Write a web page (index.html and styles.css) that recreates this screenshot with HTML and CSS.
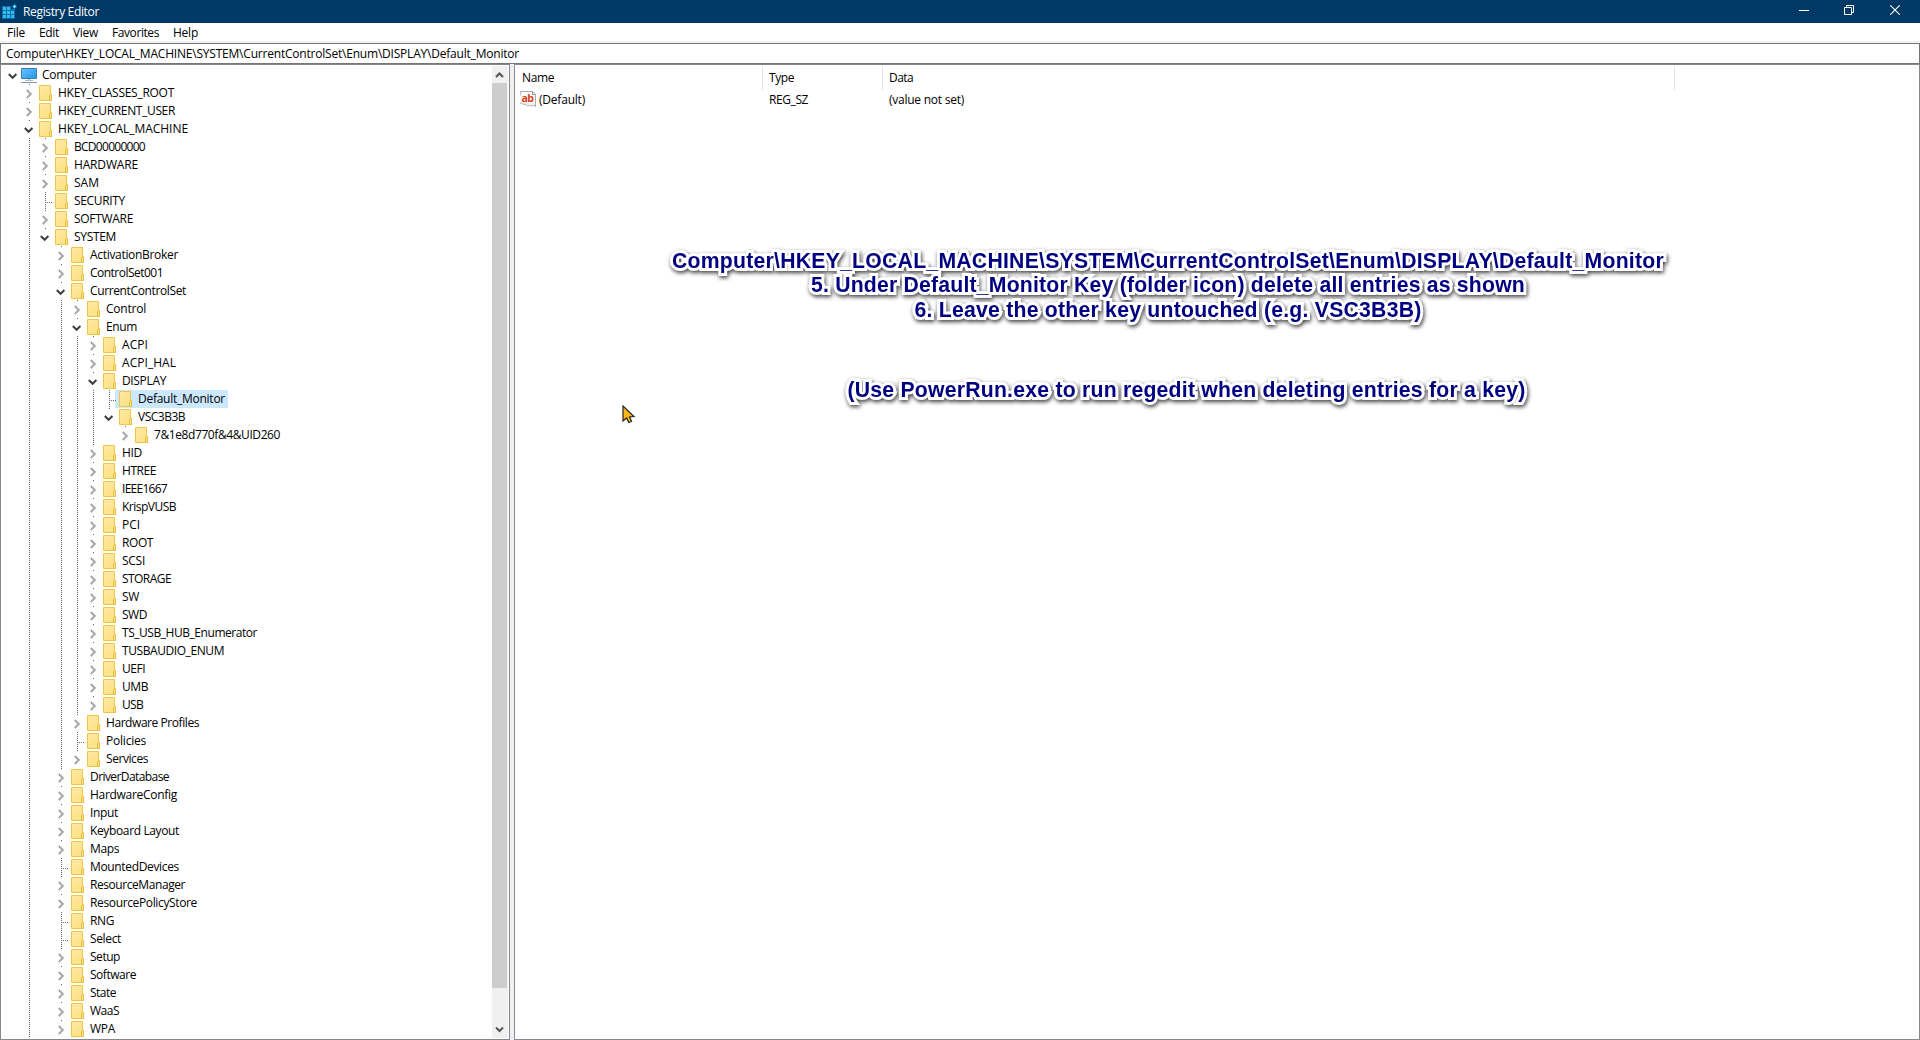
FILE: index.html
```html
<!DOCTYPE html>
<html lang="en">
<head>
<meta charset="utf-8">
<title>Registry Editor</title>
<link rel="stylesheet" href="styles.css">
</head>
<body>
<svg width="0" height="0" class="defs" aria-hidden="true">
  <defs>
    <linearGradient id="fold" x1="0" y1="0" x2="1" y2="1"><stop offset="0" stop-color="#ffeaa6"/><stop offset="1" stop-color="#fddf7c"/></linearGradient>
    <linearGradient id="screen" x1="0" y1="0" x2="1" y2="1"><stop offset="0" stop-color="#6cc3ff"/><stop offset="1" stop-color="#2196ee"/></linearGradient>
    <symbol id="folder" viewBox="0 0 13 16">
      <path d="M.5.5h11v9h1v6H.5z" fill="url(#fold)" stroke="#edc548"/>
      <path d="M10.5 15.5v-5l1-1h1v6z" fill="#ffe48c" stroke="#e5bd42"/>
    </symbol>
    <symbol id="right" viewBox="0 0 7 10"><path d="M.8 1l4 4-4 4" fill="none" stroke="#a6a6a6" stroke-width="2"/></symbol>
    <symbol id="down" viewBox="0 0 10 7"><path d="M.8 1l3.800 3.800L8.400 1" fill="none" stroke="#404040" stroke-width="2"/></symbol>
  </defs>
</svg>
<div class="window">
  <header class="titlebar">
    <svg class="appicon" width="16" height="16" viewBox="0 0 16 16">
      <path d="M0 2h9v3h4v10H0z" fill="#0a6ea8"/>
      <g fill="#35bdf0"><path d="M1 3h3v3H1zM5 3h3v3H5zM1 7h3v3H1zM5 7h3v3H5zM9 7h3v3H9zM1 11h3v3H1zM5 11h3v3H5zM9 11h3v3H9z"/></g>
      <path d="M12.5 0L15 2.5 12.5 5 10 2.5z" fill="#1592d2"/><path d="M12.5 1v3M11 2.5h3" stroke="#7fe0ff"/>
    </svg>
    <span class="fit title" data-w="76">Registry Editor</span>
    <div class="controls">
      <svg width="10" height="10"><path d="M0 5.5h10" stroke="#fff"/></svg>
      <svg width="10" height="10"><path d="M.5 2.5h7v7h-7zM2.5 2V.5h7v7H8" stroke="#fff" fill="none"/></svg>
      <svg width="10" height="10"><path d="M.3.3l9.4 9.4M9.7.3L.3 9.7" stroke="#fff" stroke-width="1.1"/></svg>
    </div>
  </header>
  <nav class="menu">
    <span class="fit" data-w="18">File</span><span class="fit" data-w="20">Edit</span><span class="fit" data-w="25">View</span><span class="fit" data-w="47">Favorites</span><span class="fit" data-w="25">Help</span>
  </nav>
  <div class="address"><span class="fit" data-w="513">Computer\HKEY_LOCAL_MACHINE\SYSTEM\CurrentControlSet\Enum\DISPLAY\Default_Monitor</span></div>
  <main class="panes">
    <section class="tree-pane">
      <div class="tree" id="tree"></div>
      <div class="scrollbar">
        <svg width="15" height="17"><path d="M4 11l3.5-3.5L11 11" fill="none" stroke="#555" stroke-width="2"/></svg>
        <div class="thumb"></div>
        <svg width="15" height="17"><path d="M4 6.500l3.500 3.500L11 6.500" fill="none" stroke="#555" stroke-width="2"/></svg>
      </div>
    </section>
    <section class="values">
      <div class="row head"><div><span class="fit" data-w="32">Name</span></div><div><span class="fit" data-w="25">Type</span></div><div><span class="fit" data-w="24">Data</span></div></div>
      <div class="row entry">
        <div>
          <svg width="16" height="16" viewBox="0 0 16 16"><path d="M.5.5h12l3 3v12l-2-1.500-2 1-2-1-2 1-2-2-2 .5-2-1.500-3 1z" fill="#fafafa" stroke="#aaa"/><path d="M12.500.5v3h3" fill="none" stroke="#999"/><text x="1.500" y="10.500" class="ab">ab</text></svg>
          <span class="fit" data-w="46">(Default)</span>
        </div>
        <div><span class="fit" data-w="39">REG_SZ</span></div><div><span class="fit" data-w="75">(value not set)</span></div>
      </div>
    </section>
  </main>
  <div class="notes">
    <p><span class="fit" data-w="992">Computer\HKEY_LOCAL_MACHINE\SYSTEM\CurrentControlSet\Enum\DISPLAY\Default_Monitor</span></p>
    <p><span class="fit" data-w="714">5. Under Default_Monitor Key (folder icon) delete all entries as shown</span></p>
    <p><span class="fit" data-w="507">6. Leave the other key untouched (e.g. VSC3B3B)</span></p>
    <p class="aside"><span class="fit" data-w="678">(Use PowerRun.exe to run regedit when deleting entries for a key)</span></p>
  </div>
  <svg class="cursor" width="14" height="20" viewBox="0 0 14 20"><path d="M1 1v15l3.700-3 2.200 4.500 2.600-1.300-2-4.200 4.500-.5z" fill="#fdb813" stroke="#222" stroke-width="1.200"/></svg>
</div>
<script src="tree.js"></script>
</body>
</html>
```
FILE: tree.js
```js
// Each row: depth, state (o = open, c = closed, l = leaf), label, label width
const rows = [
  [0,'o','Computer',54],[1,'c','HKEY_CLASSES_ROOT',116],[1,'c','HKEY_CURRENT_USER',117],[1,'o','HKEY_LOCAL_MACHINE',130],
  [2,'c','BCD00000000',71],[2,'c','HARDWARE',64],[2,'c','SAM',25],[2,'l','SECURITY',51],[2,'c','SOFTWARE',59],[2,'o','SYSTEM',42],
  [3,'c','ActivationBroker',88],[3,'c','ControlSet001',73],[3,'o','CurrentControlSet',96],
  [4,'c','Control',40],[4,'o','Enum',31],
  [5,'c','ACPI',26],[5,'c','ACPI_HAL',54],[5,'o','DISPLAY',44],
  [6,'l','Default_Monitor',87],[6,'o','VSC3B3B',47],[7,'c','7&1e8d770f&4&UID260',126],
  [5,'c','HID',20],[5,'c','HTREE',34],[5,'c','IEEE1667',45],[5,'c','KrispVUSB',54],[5,'c','PCI',18],[5,'c','ROOT',31],
  [5,'c','SCSI',23],[5,'c','STORAGE',49],[5,'c','SW',17],[5,'c','SWD',25],[5,'c','TS_USB_HUB_Enumerator',135],
  [5,'c','TUSBAUDIO_ENUM',102],[5,'c','UEFI',23],[5,'c','UMB',26],[5,'c','USB',21],
  [4,'c','Hardware Profiles',93],[4,'l','Policies',40],[4,'c','Services',42],
  [3,'c','DriverDatabase',79],[3,'c','HardwareConfig',87],[3,'c','Input',28],[3,'c','Keyboard Layout',89],[3,'c','Maps',29],
  [3,'l','MountedDevices',89],[3,'c','ResourceManager',95],[3,'c','ResourcePolicyStore',107],[3,'l','RNG',24],[3,'l','Select',31],
  [3,'c','Setup',30],[3,'c','Software',46],[3,'c','State',26],[3,'c','WaaS',29],[3,'c','WPA',25]
];
// Depths whose branch ends with its open key draw no guide below it
const lastBranch = [0, 2, 6];
const computer = '<svg class="pc" width="16" height="16" viewBox="0 0 16 16"><path d="M.5.5h15v10H.5z" fill="url(#screen)" stroke="#3b7ea8"/><path d="M7 11h2v1H7zM4 12h8v1H4z" fill="#b4bcc2"/><path d="M0 14.500h16" stroke="#8295a4"/></svg>';

document.getElementById('tree').innerHTML = rows.map(([depth, state, label, width]) => {
  let cells = '';
  for (let d = 1; d < depth; d++) cells += `<i class="cell${lastBranch.includes(d) ? '' : ' guide'}"></i>`;
  const glyph = state === 'o' ? '<svg class="down" width="10" height="7"><use href="#down"/></svg>'
    : state === 'c' ? '<svg class="right" width="7" height="10"><use href="#right"/></svg>' : '';
  cells += `<i class="cell ${depth === 0 ? 'root' : state === 'l' ? 'guide leaf' : 'tick'}">${glyph}</i>`;
  const icon = depth ? '<svg width="13" height="16"><use href="#folder"/></svg>' : computer;
  const selected = label === 'Default_Monitor' ? ' selected' : '';
  return `<div class="node${depth ? '' : ' top'}">${cells}<span class="item${selected}">${icon}<span class="fit" data-w="${width}">${label.replace(/&/g, '&amp;')}</span></span></div>`;
}).join('');

// Spread the letters so that each label takes its nominal width
document.querySelectorAll('.fit').forEach(el => {
  const extra = Number(el.dataset.w) - el.getBoundingClientRect().width;
  el.style.letterSpacing = (extra / el.textContent.length) + 'px';
});
```
FILE: styles.css
```css
* { box-sizing: border-box; }
body { margin: 0; background: #fff; color: #000; font: 12px/18px "Open Sans", "Noto Sans", sans-serif; overflow: hidden; }
.defs { position: absolute; }
.window { position: relative; display: flex; flex-direction: column; width: 1920px; height: 1040px; background: #f0f0f0; }
svg { display: block; flex: none; }
.fit { white-space: nowrap; flex: none; }

.titlebar { display: flex; flex: none; height: 23px; padding-left: 2px; background: #003966; color: #fff; }
.appicon { margin-top: 4px; }
.title { margin: 3px 0 0 5px; }
.controls { display: flex; gap: 36px; margin: 5px 20px 0 auto; }
.controls svg:first-child { margin-right: -1px; }
.menu { display: flex; gap: 14px; flex: none; height: 18px; padding: 1px 0 0 7px; background: #fff; }
.address { flex: none; height: 21px; margin-top: 2px; padding: 1px 0 0 5px; border: 1px solid #767676; background: #fff; }

.panes { display: flex; flex: 1; gap: 4px; min-height: 0; }
.tree-pane { display: flex; width: 510px; padding: 1px 1px 0 0; border: 1px solid #828790; background: #fff; }
.tree { flex: 1; overflow: hidden; }
.node { display: flex; height: 18px; padding-left: 20px; }
.node.top { padding-left: 5px; }
.cell { position: relative; flex: none; width: 16px; }
.guide { background: repeating-linear-gradient(#666 0 1px, transparent 1px 2px) 8px 0 / 1px 18px no-repeat; }
.tick { background: linear-gradient(#666, #666) 8px 0 / 1px 1px no-repeat; }
.leaf { background: repeating-linear-gradient(#666 0 1px, transparent 1px 2px) 8px 0 / 1px 18px no-repeat, repeating-linear-gradient(90deg, #666 0 1px, transparent 1px 2px) 8px 10px / 8px 1px no-repeat; }
.cell svg { position: absolute; }
.cell .right { left: 5px; top: 5px; }
.cell .down { left: 3px; top: 7px; }
.cell.root .down { left: 2px; }
.item { display: flex; gap: 6px; height: 18px; padding: 0 3px 0 4px; margin-left: -2px; }
.top .item { gap: 5px; margin-left: -5px; }
.item > svg { margin-top: 1px; }
.item .pc { margin-top: 2px; }
.selected { background: #cce8ff; }

.scrollbar { display: flex; flex-direction: column; width: 16px; height: 972px; background: #f0f0f0; }
.thumb { flex: none; width: 15px; height: 905px; background: #cdcdcd; }
.scrollbar svg:last-child { margin-top: auto; }

.values { flex: 1; border: 1px solid #828790; background: #fff; }
.row { display: grid; grid-template-columns: 248px 120px 792px; }
.head { height: 25px; padding-top: 1px; }
.head div { padding: 3px 0 0 7px; border-right: 1px solid #e5e5e5; }
.head div + div { padding-left: 6px; }
.entry div { display: flex; padding-left: 6px; }
.entry div:first-child { gap: 3px; padding-left: 5px; }
.entry { margin-top: 1px; }
.ab { font: bold 10.500px "Open Sans", sans-serif; letter-spacing: -.5px; fill: #d8401c; }

.notes { position: absolute; left: 670px; top: 249px; width: 996px; color: #000080; font: bold 21.200px/24.300px "Liberation Sans", Arial, sans-serif; text-align: center; -webkit-text-stroke: 6px #fff; paint-order: stroke fill; stroke-linejoin: round; filter: drop-shadow(1px 2px 2px rgba(0,0,0,.75)); }
.notes p { margin: 0; }
.notes .aside { margin: 56px 0 0 37px; }
.cursor { position: absolute; left: 622px; top: 405px; }
```
